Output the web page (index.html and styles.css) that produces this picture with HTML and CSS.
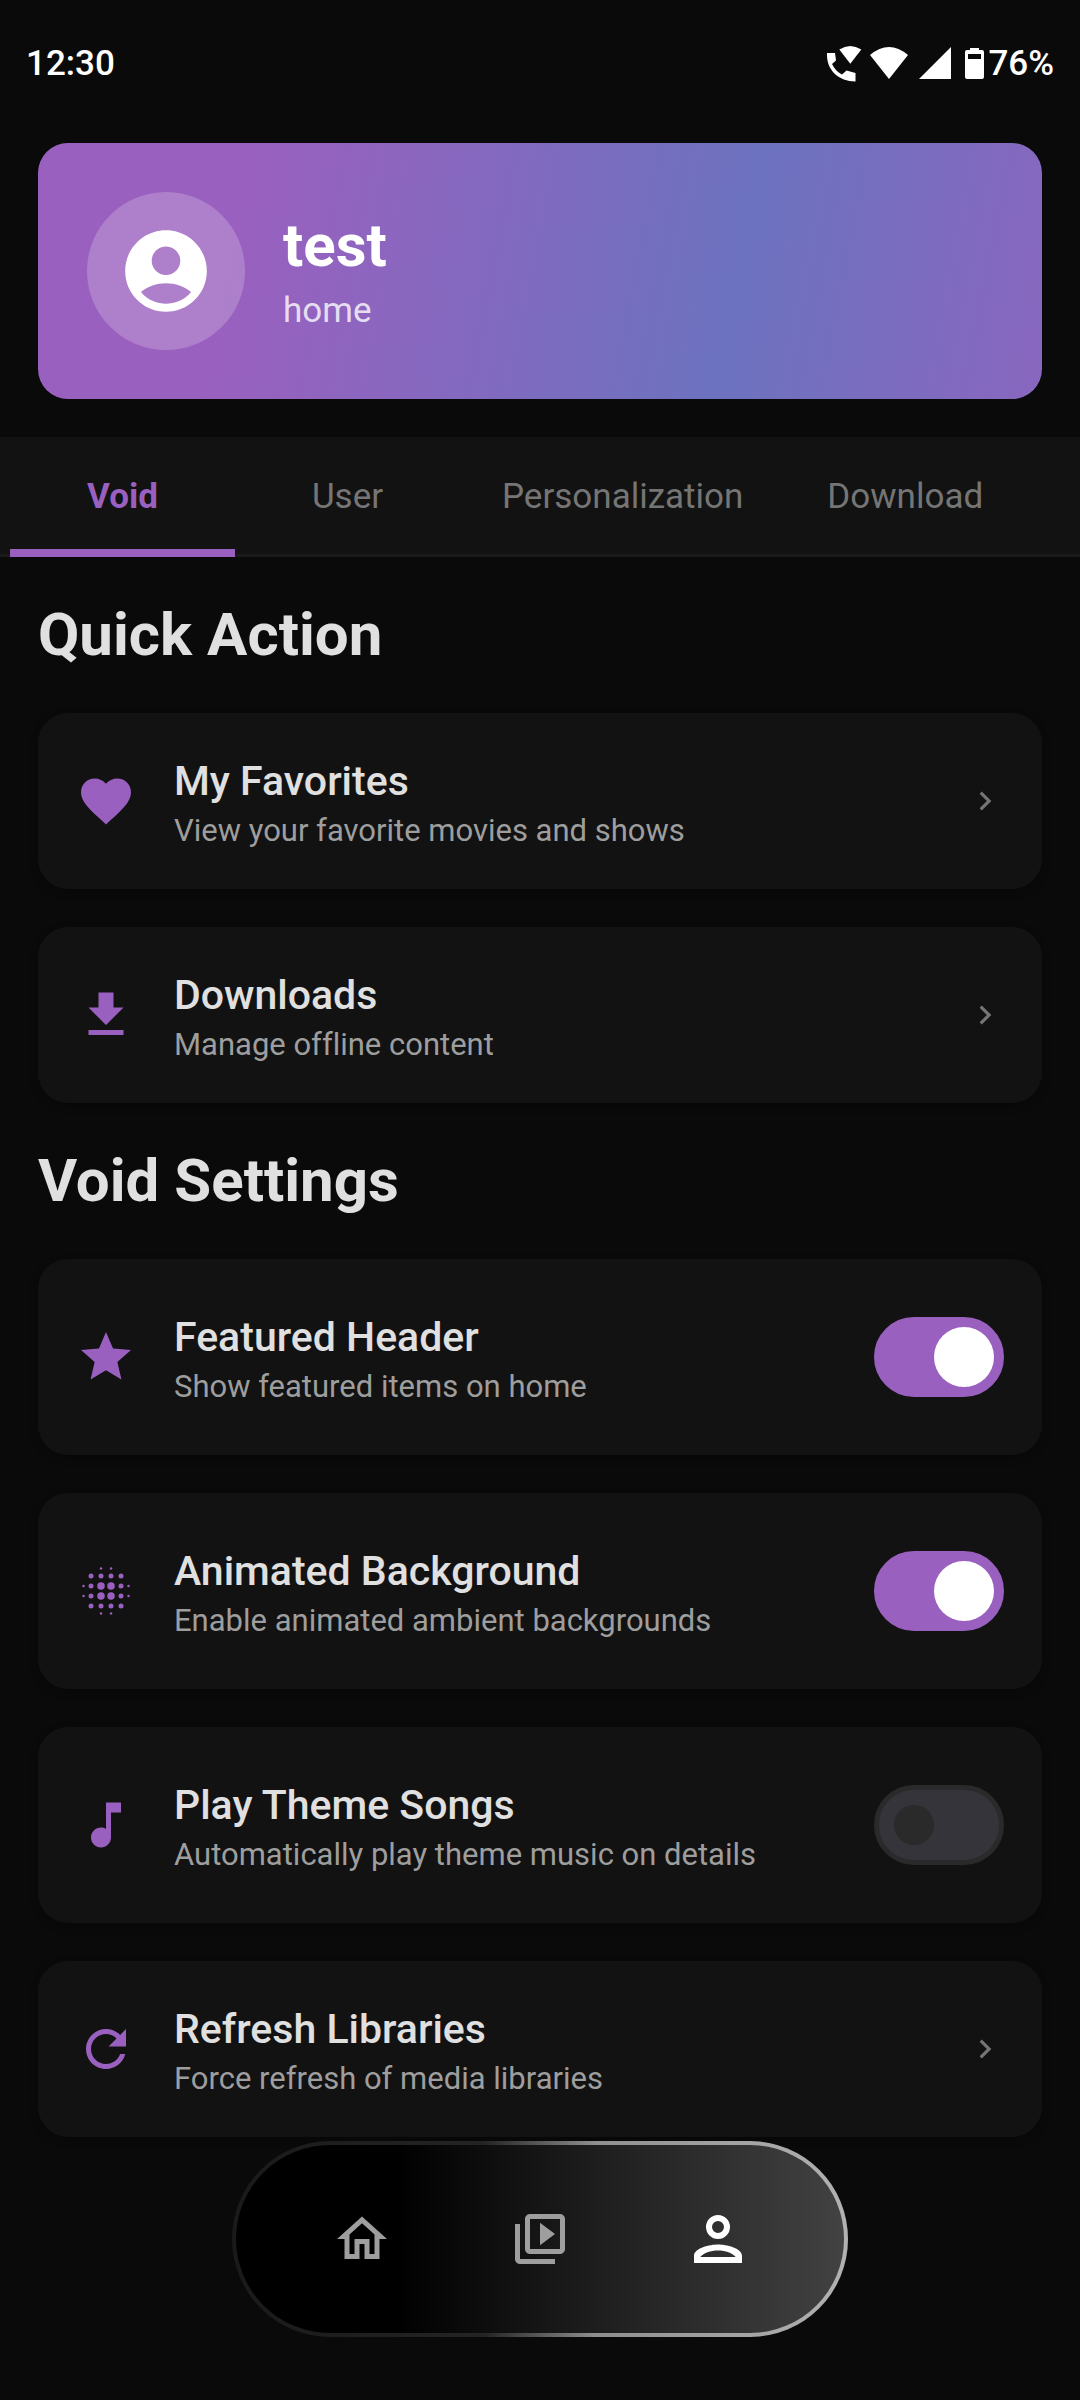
FILE: index.html
```html
<!DOCTYPE html>
<html lang="en">
<head>
<meta charset="utf-8">
<meta name="viewport" content="width=device-width, initial-scale=1">
<title>Settings</title>
<link rel="stylesheet" href="styles.css">
</head>
<body>
<header class="status">
  <span>12:30</span>
  <div class="status-right">
    <svg class="status-icons" viewBox="0 0 160 36" fill="currentColor" aria-hidden="true">
      <path d="M2 7h8l1 7.500-4 3.500c2.500 5 6 8.500 10 10.500l4.500-4 9 2.500v8.500C14 35.500 1 24 2 7z"/>
      <path d="M14.300 3.500Q25.300-3.500 36.300 3.500L25.300 17.700z"/>
      <path d="M45 9Q64-7 83 9L64 33z"/>
      <path d="M94 33h32V1z"/>
      <path fill-rule="evenodd" d="M145 2h9v2h3q2 0 2 2v25q0 2-2 2h-15q-2 0-2-2V6q0-2 2-2h3zM143 8v5h13V8z"/>
    </svg>
    <span>76%</span>
  </div>
</header>

<main>
  <section class="hero">
    <div class="avatar">
      <svg viewBox="0 0 24 24" fill="currentColor" aria-hidden="true"><path d="M12 2C6.480 2 2 6.480 2 12s4.480 10 10 10 10-4.480 10-10S17.520 2 12 2zm0 4c1.930 0 3.500 1.570 3.500 3.500S13.930 13 12 13s-3.500-1.570-3.500-3.500S10.070 6 12 6zm0 14c-2.030 0-4.430-.820-6.140-2.880C7.550 15.800 9.680 15 12 15s4.450.800 6.140 2.120C16.430 19.180 14.030 20 12 20z"/></svg>
    </div>
    <div>
      <h1 class="name">test</h1>
      <p class="server">home</p>
    </div>
  </section>

  <div class="tabs" role="tablist">
    <button class="tab active" role="tab" aria-selected="true">Void</button>
    <button class="tab" role="tab" aria-selected="false">User</button>
    <button class="tab" role="tab" aria-selected="false">Personalization</button>
    <button class="tab" role="tab" aria-selected="false">Download</button>
  </div>

  <section class="group">
    <h2 class="heading">Quick Action</h2>
    <a class="card" href="#favorites">
      <svg class="icon" viewBox="0 0 24 24" fill="currentColor" aria-hidden="true"><path d="M12 21.350l-1.450-1.320C5.400 15.360 2 12.280 2 8.500 2 5.420 4.420 3 7.500 3c1.740 0 3.410.810 4.500 2.090C13.090 3.810 14.760 3 16.500 3 19.580 3 22 5.420 22 8.500c0 3.780-3.400 6.860-8.550 11.540L12 21.350z"/></svg>
      <span class="text"><span class="title">My Favorites</span><span class="sub">View your favorite movies and shows</span></span>
      <svg class="chevron" viewBox="0 0 24 24" fill="currentColor" aria-hidden="true"><path d="M8.590 16.590L13.170 12 8.590 7.410 10 6l6 6-6 6z"/></svg>
    </a>
    <a class="card" href="#downloads">
      <svg class="icon" viewBox="0 0 24 24" fill="currentColor" aria-hidden="true"><path d="M19 9h-4V3H9v6H5l7 7 7-7zM5 18v2h14v-2H5z"/></svg>
      <span class="text"><span class="title">Downloads</span><span class="sub">Manage offline content</span></span>
      <svg class="chevron" viewBox="0 0 24 24" fill="currentColor" aria-hidden="true"><path d="M8.590 16.590L13.170 12 8.590 7.410 10 6l6 6-6 6z"/></svg>
    </a>
  </section>

  <section class="group">
    <h2 class="heading">Void Settings</h2>
    <label class="card toggle">
      <svg class="icon" viewBox="0 0 24 24" fill="currentColor" aria-hidden="true"><path d="M12 17.270L18.180 21l-1.640-7.030L22 9.240l-7.190-.610L12 2 9.190 8.630 2 9.240l5.460 4.730L5.820 21z"/></svg>
      <span class="text"><span class="title">Featured Header</span><span class="sub">Show featured items on home</span></span>
      <input class="switch" type="checkbox" role="switch" checked>
    </label>
    <label class="card toggle">
      <svg class="icon" viewBox="0 0 24 24" fill="currentColor" aria-hidden="true">
        <circle cx="6" cy="6" r="1"/><circle cx="10" cy="6" r="1"/><circle cx="14" cy="6" r="1"/><circle cx="18" cy="6" r="1"/>
        <circle cx="6" cy="10" r="1"/><circle cx="10" cy="10" r="1.500"/><circle cx="14" cy="10" r="1.500"/><circle cx="18" cy="10" r="1"/>
        <circle cx="6" cy="14" r="1"/><circle cx="10" cy="14" r="1.500"/><circle cx="14" cy="14" r="1.500"/><circle cx="18" cy="14" r="1"/>
        <circle cx="6" cy="18" r="1"/><circle cx="10" cy="18" r="1"/><circle cx="14" cy="18" r="1"/><circle cx="18" cy="18" r="1"/>
        <circle cx="10" cy="3" r=".5"/><circle cx="14" cy="3" r=".5"/><circle cx="10" cy="21" r=".5"/><circle cx="14" cy="21" r=".5"/>
        <circle cx="3" cy="10" r=".5"/><circle cx="3" cy="14" r=".5"/><circle cx="21" cy="10" r=".5"/><circle cx="21" cy="14" r=".5"/>
      </svg>
      <span class="text"><span class="title">Animated Background</span><span class="sub">Enable animated ambient backgrounds</span></span>
      <input class="switch" type="checkbox" role="switch" checked>
    </label>
    <label class="card toggle">
      <svg class="icon" viewBox="0 0 24 24" fill="currentColor" aria-hidden="true"><path d="M12 3v10.550c-.590-.340-1.270-.550-2-.550-2.210 0-4 1.790-4 4s1.790 4 4 4 4-1.790 4-4V7h4V3h-6z"/></svg>
      <span class="text"><span class="title">Play Theme Songs</span><span class="sub">Automatically play theme music on details</span></span>
      <input class="switch" type="checkbox" role="switch">
    </label>
    <a class="card" href="#refresh">
      <svg class="icon" viewBox="0 0 24 24" fill="currentColor" aria-hidden="true"><path d="M17.650 6.350C16.200 4.900 14.210 4 12 4c-4.420 0-7.990 3.580-7.990 8s3.570 8 7.990 8c3.730 0 6.840-2.550 7.730-6h-2.080c-.820 2.330-3.040 4-5.650 4-3.310 0-6-2.690-6-6s2.690-6 6-6c1.660 0 3.140.690 4.220 1.780L13 11h7V4l-2.350 2.350z"/></svg>
      <span class="text"><span class="title">Refresh Libraries</span><span class="sub">Force refresh of media libraries</span></span>
      <svg class="chevron" viewBox="0 0 24 24" fill="currentColor" aria-hidden="true"><path d="M8.590 16.590L13.170 12 8.590 7.410 10 6l6 6-6 6z"/></svg>
    </a>
  </section>
</main>

<nav class="dock">
  <a href="#home" aria-label="Home"><svg viewBox="0 0 24 24" fill="currentColor"><path d="M12 5.690l5 4.500V18h-2v-6H9v6H7v-7.810l5-4.500M12 3L2 12h3v8h6v-6h2v6h6v-8h3L12 3z"/></svg></a>
  <a href="#library" aria-label="Library"><svg viewBox="0 0 24 24" fill="currentColor"><path d="M4 6H2v14c0 1.100.900 2 2 2h14v-2H4V6zm16-4H8c-1.100 0-2 .900-2 2v12c0 1.100.900 2 2 2h12c1.100 0 2-.900 2-2V4c0-1.100-.900-2-2-2zm0 14H8V4h12v12zM12 5.500v9l6-4.500z"/></svg></a>
  <a class="current" href="#profile" aria-label="Profile" aria-current="page"><svg viewBox="0 0 24 24" fill="currentColor" fill-rule="evenodd"><path d="M12 4a4 4 0 1 0 0 8 4 4 0 1 0 0-8zm0 2a2 2 0 1 1 0 4 2 2 0 1 1 0-4zM12 13.800c-2.670 0-8 1.140-8 3.800V20h16v-2.400c0-2.660-5.330-3.800-8-3.800zm0 2c2.400 0 5 .9 5.900 2.200H6.100c.9-1.300 3.500-2.200 5.900-2.200z"/></svg></a>
</nav>
</body>
</html>
```
FILE: styles.css
```css
:root {
  --bg: #0a0a0a;
  --surface: #121212;
  --accent: #9a60bf;
  --text: #e0e0e0;
  --muted: #9e9e9e;
  --dim: #757575;
  --space: 38px;
}

* {
  box-sizing: border-box;
}

body {
  margin: 0;
  min-height: 100vh;
  background: var(--bg);
  color: var(--text);
  font-family: Roboto, sans-serif;
  font-variant-ligatures: none;
}

h1, h2, p {
  margin: 0;
}

svg {
  display: block;
}

.status {
  display: flex;
  align-items: center;
  justify-content: space-between;
  height: 143px;
  padding: 0 26px 16px;
  color: #fff;
  font-size: 35px;
  font-weight: 500;
}

.status-right {
  display: flex;
  align-items: center;
  gap: 3px;
}

.status-icons {
  width: 160px;
  height: 36px;
}

.hero {
  display: flex;
  align-items: center;
  gap: var(--space);
  margin: 0 var(--space) var(--space);
  padding: 49px;
  border-radius: 30px;
  background: linear-gradient(101deg, var(--accent) 20%, #6c72bf 69%, var(--accent) 118%);
  color: #fff;
}

.avatar {
  display: grid;
  place-items: center;
  width: 158px;
  height: 158px;
  border-radius: 50%;
  background: rgba(255, 255, 255, 0.2);
}

.avatar svg {
  width: 98px;
  height: 98px;
}

.name {
  font-size: 60px;
  line-height: 80px;
  font-weight: 700;
}

.server {
  font-size: 35px;
  line-height: 50px;
  color: rgba(255, 255, 255, 0.8);
}

.tabs {
  display: flex;
  height: 120px;
  padding: 0 10px;
  overflow: hidden;
  background: var(--surface);
  box-shadow: inset 0 -3px #1a1a1a;
}

.tab {
  flex: none;
  min-width: 225px;
  padding: 0 42px;
  border: 0;
  background: none;
  color: var(--dim);
  font: 400 35px/50px Roboto, sans-serif;
}

.tab.active {
  box-shadow: inset 0 -8px var(--accent);
  color: var(--accent);
  font-weight: 700;
}

.group {
  display: flex;
  flex-direction: column;
  gap: var(--space);
  padding: var(--space) var(--space) 0;
}

.heading {
  font-size: 60px;
  line-height: 80px;
  font-weight: 700;
}

.card {
  display: flex;
  align-items: center;
  gap: var(--space);
  padding: var(--space);
  border-radius: 30px;
  background: var(--surface);
  box-shadow: 0 3px 8px rgba(0, 0, 0, 0.3);
  color: var(--text);
  text-decoration: none;
}

.card.toggle {
  padding: 48px var(--space);
}

.icon {
  flex: none;
  width: 60px;
  height: 60px;
  color: var(--accent);
}

.text {
  flex: 1;
  display: flex;
  flex-direction: column;
}

.title {
  font-size: 41px;
  line-height: 60px;
  font-weight: 500;
}

.sub {
  font-size: 31px;
  line-height: 40px;
  color: var(--muted);
}

.chevron {
  width: 38px;
  height: 38px;
  color: var(--dim);
}

.switch {
  appearance: none;
  display: flex;
  align-items: center;
  width: 130px;
  height: 80px;
  margin: 0;
  padding: 0 15px;
  border: 5px solid #2a2a2a;
  border-radius: 40px;
  background: #36343b;
}

.switch::before {
  content: "";
  width: 40px;
  height: 40px;
  border-radius: 50%;
  background: #2a2a2a;
}

.switch:checked {
  justify-content: flex-end;
  padding: 0 5px;
  border-color: var(--accent);
  background: var(--accent);
}

.switch:checked::before {
  width: 60px;
  height: 60px;
  background: #fff;
}

/* Floating navigation, above the scrolling list */
.dock {
  position: fixed;
  bottom: 63px;
  left: 50%;
  transform: translateX(-50%);
  display: grid;
  grid-template-columns: repeat(3, 1fr);
  width: 616px;
  height: 196px;
  padding: 0 37px;
  border: 4px solid transparent;
  border-radius: 98px;
  background:
    linear-gradient(90deg, #000 26%, #424242) padding-box,
    linear-gradient(90deg, #1a1a1a, #242424 41%, #8f8f8f 59%, #b2b2b2) border-box;
}

.dock a {
  display: grid;
  place-items: center;
  color: #9e9e9e;
}

.dock svg {
  width: 60px;
  height: 60px;
}

.dock .current {
  color: #fff;
}

.dock .current svg {
  width: 72px;
  height: 72px;
}
```
